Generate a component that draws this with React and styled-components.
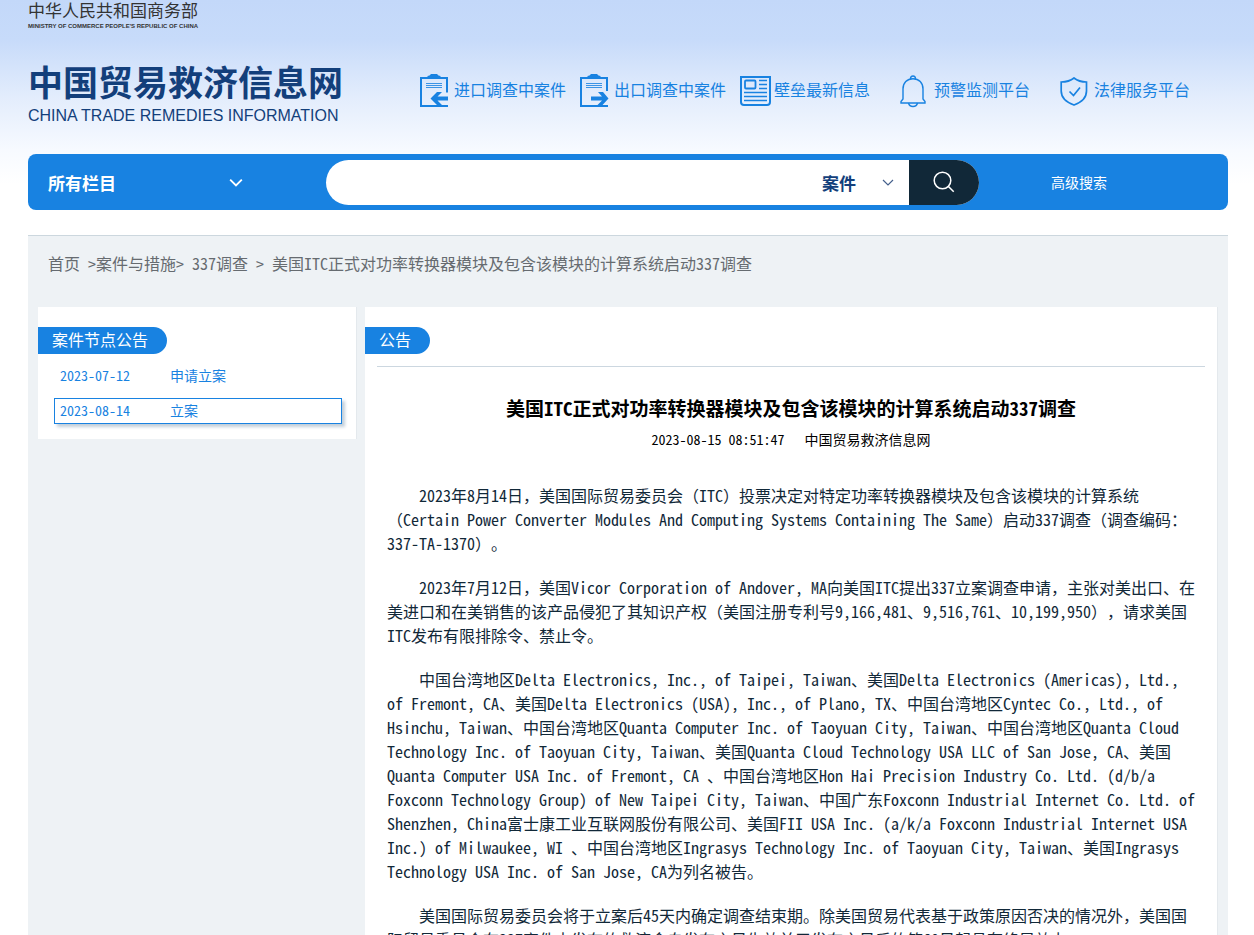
import { useState } from 'react';
import styled, { createGlobalStyle } from 'styled-components';

const paragraphs = [
  '2023年8月14日，美国国际贸易委员会（ITC）投票决定对特定功率转换器模块及包含该模块的计算系统（Certain Power Converter Modules And Computing Systems Containing The Same）启动337调查（调查编码：337-TA-1370）。',
  '2023年7月12日，美国Vicor Corporation of Andover, MA向美国ITC提出337立案调查申请，主张对美出口、在美进口和在美销售的该产品侵犯了其知识产权（美国注册专利号9,166,481、9,516,761、10,199,950），请求美国ITC发布有限排除令、禁止令。',
  '中国台湾地区Delta Electronics, Inc., of Taipei, Taiwan、美国Delta Electronics (Americas), Ltd., of Fremont, CA、美国Delta Electronics (USA), Inc., of Plano, TX、中国台湾地区Cyntec Co., Ltd., of Hsinchu, Taiwan、中国台湾地区Quanta Computer Inc. of Taoyuan City, Taiwan、中国台湾地区Quanta Cloud Technology Inc. of Taoyuan City, Taiwan、美国Quanta Cloud Technology USA LLC of San Jose, CA、美国Quanta Computer USA Inc. of Fremont, CA 、中国台湾地区Hon Hai Precision Industry Co. Ltd. (d/b/a Foxconn Technology Group) of New Taipei City, Taiwan、中国广东Foxconn Industrial Internet Co. Ltd. of Shenzhen, China富士康工业互联网股份有限公司、美国FII USA Inc. (a/k/a Foxconn Industrial Internet USA Inc.) of Milwaukee, WI 、中国台湾地区Ingrasys Technology Inc. of Taoyuan City, Taiwan、美国Ingrasys Technology USA Inc. of San Jose, CA为列名被告。',
  '美国国际贸易委员会将于立案后45天内确定调查结束期。除美国贸易代表基于政策原因否决的情况外，美国国际贸易委员会在337案件中发布的救济令自发布之日生效并于发布之日后的第60日起具有终局效力。',
];

const nodes = [
  { date: '2023-07-12', name: '申请立案' },
  { date: '2023-08-14', name: '立案', current: true },
];

const ImportIcon = () => (
  <svg width="29" height="34" viewBox="0 0 29 34" fill="none" aria-hidden="true">
    <path d="M27 18.500V4H1V32H28" stroke="#1882e1" strokeWidth="2" />
    <path d="M7.500 5V2l2-.5L11 0h6l1.500 1.500 2 .5v3z" fill="#1882e1" />
    <path d="M6 9.500h16M6 11.500h16M6 13.500h16" stroke="#3a93e5" />
    <path d="M10.500 24.500 17 18h5l-4.500 4.500H28v4H17.500L22 31h-5z" fill="#1882e1" />
  </svg>
);

const ExportIcon = () => (
  <svg width="29" height="34" viewBox="0 0 29 34" fill="none" aria-hidden="true">
    <path d="M27 17V4H1V32H28" stroke="#1882e1" strokeWidth="2" />
    <path d="M7.500 5V2l2-.5L11 0h6l1.500 1.500 2 .5v3z" fill="#1882e1" />
    <path d="M6 9.500h16M6 11.500h16M6 13.500h16" stroke="#3a93e5" />
    <path d="M28.500 24.500 23 18h-5l4 4.500H11v4h11L17.500 31h5z" fill="#1882e1" />
  </svg>
);

const NewsIcon = () => (
  <svg width="31" height="30" viewBox="0 0 31 30" fill="none" stroke="#1882e1" aria-hidden="true">
    <path d="M1 1h29v25a3 3 0 0 1-3 3H4a3 3 0 0 1-3-3z" strokeWidth="2" />
    <rect x="5" y="4.500" width="10.500" height="8" rx="1" strokeWidth="1.800" />
    <path d="M19 4.500h8M19 8.500h8M19 12.500h8M4 16.500h23M4 20.500h23M4 24.500h23" strokeWidth="1.600" />
  </svg>
);

const BellIcon = () => (
  <svg width="26" height="33" viewBox="0 0 26 33" fill="none" stroke="#1882e1" strokeWidth="1.400" aria-hidden="true">
    <path d="M1 28v-1.500l2-2.500V14C3 8 7 3.700 13 3.700S23 8 23 14v10l2 2.500v1.500z" />
    <path d="M10.500 4c0-4 5-4 5 0M8.500 28c1 4.600 8 4.600 9 0" />
  </svg>
);

const ShieldIcon = () => (
  <svg width="28" height="29" viewBox="0 0 28 29" fill="none" stroke="#1882e1" strokeWidth="1.700" aria-hidden="true">
    <path d="M14 1C11 3.400 6 5 1.200 5v9C1.200 20.500 7 25.500 14 28c7-2.500 12.500-7.500 12.500-14V5C22 5 17 3.400 14 1z" />
    <path d="m9.500 14.500 4 4 6.500-8" />
  </svg>
);

const Chevron = ({ color, size, weight }) => (
  <svg width={size} height={size} viewBox="0 0 12 12" fill="none" aria-hidden="true">
    <path d="m1 4 5 5 5-5" stroke={color} strokeWidth={weight} />
  </svg>
);

const SearchIcon = () => (
  <svg width="22" height="22" viewBox="0 0 22 22" fill="none" stroke="#ffffff" strokeWidth="1.500" aria-hidden="true">
    <circle cx="9.500" cy="9.500" r="8.300" />
    <path d="m15.200 15.200 5.500 5.500" />
  </svg>
);

const navLinks = [
  { text: '进口调查中案件', Icon: ImportIcon },
  { text: '出口调查中案件', Icon: ExportIcon },
  { text: '壁垒最新信息', Icon: NewsIcon },
  { text: '预警监测平台', Icon: BellIcon },
  { text: '法律服务平台', Icon: ShieldIcon },
];

const App = () => {
  const [keyword, setKeyword] = useState('');

  return (
    <Page>
      <GlobalStyle />
      <Header>
        <Brand>
          <Ministry>中华人民共和国商务部</Ministry>
          <MinistryEnglish>MINISTRY OF COMMERCE PEOPLE'S REPUBLIC OF CHINA</MinistryEnglish>
          <SiteName>中国贸易救济信息网</SiteName>
          <SiteEnglish>CHINA TRADE REMEDIES INFORMATION</SiteEnglish>
        </Brand>
        <Nav>
          {navLinks.map(({ text, Icon }) => (
            <NavLink key={text} href="#">
              <IconSlot><Icon /></IconSlot>
              {text}
            </NavLink>
          ))}
        </Nav>
      </Header>

      <Toolbar>
        <ColumnsButton type="button">
          所有栏目
          <Chevron color="#ffffff" size={14} weight={1.6} />
        </ColumnsButton>
        <SearchForm onSubmit={e => e.preventDefault()}>
          <SearchInput
            aria-label="搜索"
            value={keyword}
            onChange={e => setKeyword(e.target.value)}
          />
          <SelectWrap>
            <TypeSelect aria-label="类型">
              <option>案件</option>
            </TypeSelect>
            <Chevron color="#45608c" size={12} weight={1.2} />
          </SelectWrap>
          <SearchButton type="submit" aria-label="搜索"><SearchIcon /></SearchButton>
        </SearchForm>
        <AdvancedLink href="#">高级搜索</AdvancedLink>
      </Toolbar>

      <Main>
        <Breadcrumb>
          <a href="#">首页</a>{'\u00a0>'}<a href="#">案件与措施</a>{'> '}
          <a href="#">337调查</a>{' > '}美国ITC正式对功率转换器模块及包含该模块的计算系统启动337调查
        </Breadcrumb>
        <Columns>
          <Card>
            <Tab>案件节点公告</Tab>
            <NodeList>
              {nodes.map(node => (
                <li key={node.date}>
                  <NodeLink href="#" $current={node.current}>
                    <span>{node.date}</span>
                    <span>{node.name}</span>
                  </NodeLink>
                </li>
              ))}
            </NodeList>
          </Card>
          <Card>
            <Tab>公告</Tab>
            <Article>
              <Title>美国ITC正式对功率转换器模块及包含该模块的计算系统启动337调查</Title>
              <Meta>
                <span>2023-08-15 08:51:47</span>
                <span>中国贸易救济信息网</span>
              </Meta>
              <Body>
                {paragraphs.map((text, index) => (
                  <p key={index}>{text}</p>
                ))}
              </Body>
            </Article>
          </Card>
        </Columns>
      </Main>
    </Page>
  );
};

const GlobalStyle = createGlobalStyle`
  * {
    box-sizing: border-box;
  }

  body {
    margin: 0;
    background: #ffffff;
    color: #112838;
    font-family: "Noto Sans Mono CJK SC", "Noto Sans CJK SC", "Liberation Mono", monospace;
    font-size: 16px;
    text-spacing-trim: space-all;
  }

  a {
    color: inherit;
    text-decoration: none;
  }

  button, input, select {
    font: inherit;
    border: 0;
    padding: 0;
    background: none;
  }
`;

const Page = styled.div`
  min-height: 100vh;
  padding: 0 26px 0 28px;
  background: linear-gradient(#c3d8f9 0, #c7dbfa 40px, #e2ecfc 95px, #f7faff 150px, #ffffff 184px);
`;

const Header = styled.header`
  display: flex;
  gap: 72px;
  height: 154px;
`;

const Brand = styled.div`
  flex: none;
  width: 320px;
  padding-top: 2px;
  font-family: "Liberation Sans", "Noto Sans CJK SC", sans-serif;
  white-space: nowrap;
`;

const Ministry = styled.div`
  font-size: 17px;
  line-height: 20px;
  color: #333333;
`;

const MinistryEnglish = styled.div`
  font-size: 6px;
  font-weight: 700;
  line-height: 8px;
  color: #333333;
`;

const SiteName = styled.h1`
  margin: 32px 0 0;
  font-size: 35px;
  line-height: 44px;
  font-weight: 700;
  color: #133f7b;
`;

const SiteEnglish = styled.div`
  font-size: 16px;
  line-height: 20px;
  color: #133f7b;
`;

const Nav = styled.nav`
  display: grid;
  grid-template-columns: repeat(5, 160px);
  align-items: start;
  padding-top: 74px;
`;

const NavLink = styled.a`
  display: flex;
  height: 34px;
  color: #1882e1;
  line-height: 30px;
  white-space: nowrap;
`;

const IconSlot = styled.span`
  display: flex;
  align-items: center;
  width: 34px;
`;

const Toolbar = styled.div`
  display: flex;
  align-items: center;
  height: 56px;
  border-radius: 8px;
  background: #1882e1;
  color: #ffffff;
`;

const ColumnsButton = styled.button`
  display: flex;
  align-items: center;
  justify-content: space-between;
  width: 195px;
  margin: 0 83px 0 20px;
  color: #ffffff;
  font-size: 17px;
  font-weight: 700;
  cursor: pointer;
`;

const SearchForm = styled.form`
  display: flex;
  width: 653px;
  height: 45px;
  border-radius: 23px;
  overflow: hidden;
  background: #ffffff;
`;

const SearchInput = styled.input`
  flex: 1;
  min-width: 0;
  padding-left: 20px;
  outline: none;
`;

const SelectWrap = styled.label`
  display: flex;
  align-items: center;
  width: 87px;
  padding-right: 15px;
`;

const TypeSelect = styled.select`
  flex: 1;
  appearance: none;
  color: #133f7b;
  font-size: 17px;
  font-weight: 700;
`;

const SearchButton = styled.button`
  display: flex;
  align-items: center;
  justify-content: center;
  width: 70px;
  background: #112838;
  cursor: pointer;
`;

const AdvancedLink = styled.a`
  margin-left: 72px;
  font-size: 14px;
`;

const Main = styled.main`
  margin-top: 25px;
  padding: 0 10px;
  border-top: 1px solid #ccd7de;
  background: #eef2f5;
`;

const Breadcrumb = styled.nav`
  padding: 15px 10px 32px;
  line-height: 24px;
  color: #666b70;
  white-space: pre-wrap;
`;

const Columns = styled.div`
  display: grid;
  grid-template-columns: 319px minmax(0, 1fr);
  gap: 8px;
  align-items: start;
`;

const Card = styled.section`
  padding-top: 20px;
  border-right: 1px solid #e4e9ed;
  background: #ffffff;
`;

const Tab = styled.h2`
  width: fit-content;
  height: 27px;
  margin: 0;
  padding: 0 19px 0 14px;
  border-radius: 0 14px 14px 0;
  background: #1882e1;
  color: #ffffff;
  font-size: 16px;
  font-weight: 400;
  line-height: 25px;
`;

const NodeList = styled.ul`
  display: grid;
  gap: 9px;
  margin: 0;
  padding: 9px 14px 15px 16px;
  list-style: none;
`;

const NodeLink = styled.a`
  display: grid;
  grid-template-columns: 110px 1fr;
  height: 26px;
  padding: 0 5px;
  border: 1px solid ${props => (props.$current ? '#1882e1' : 'transparent')};
  box-shadow: ${props => (props.$current ? '3px 3px 3px #c3cfda' : 'none')};
  color: #1882e1;
  font-size: 14px;
  line-height: 22px;
`;

const Article = styled.article`
  margin: 12px 12px 0;
  border-top: 1px solid #ccd7e0;
`;

const Title = styled.h3`
  margin: 27px 0 0;
  font-size: 19px;
  line-height: 28px;
  font-weight: 700;
  color: #000000;
  text-align: center;
`;

const Meta = styled.div`
  display: flex;
  justify-content: center;
  gap: 20px;
  margin-top: 5px;
  font-size: 14px;
  line-height: 24px;
  color: #000000;
`;

const Body = styled.div`
  padding: 32px 8px 20px 10px;
  line-height: 24px;

  p {
    margin: 0 0 20px;
    text-indent: 32px;
  }
`;

export default App;
